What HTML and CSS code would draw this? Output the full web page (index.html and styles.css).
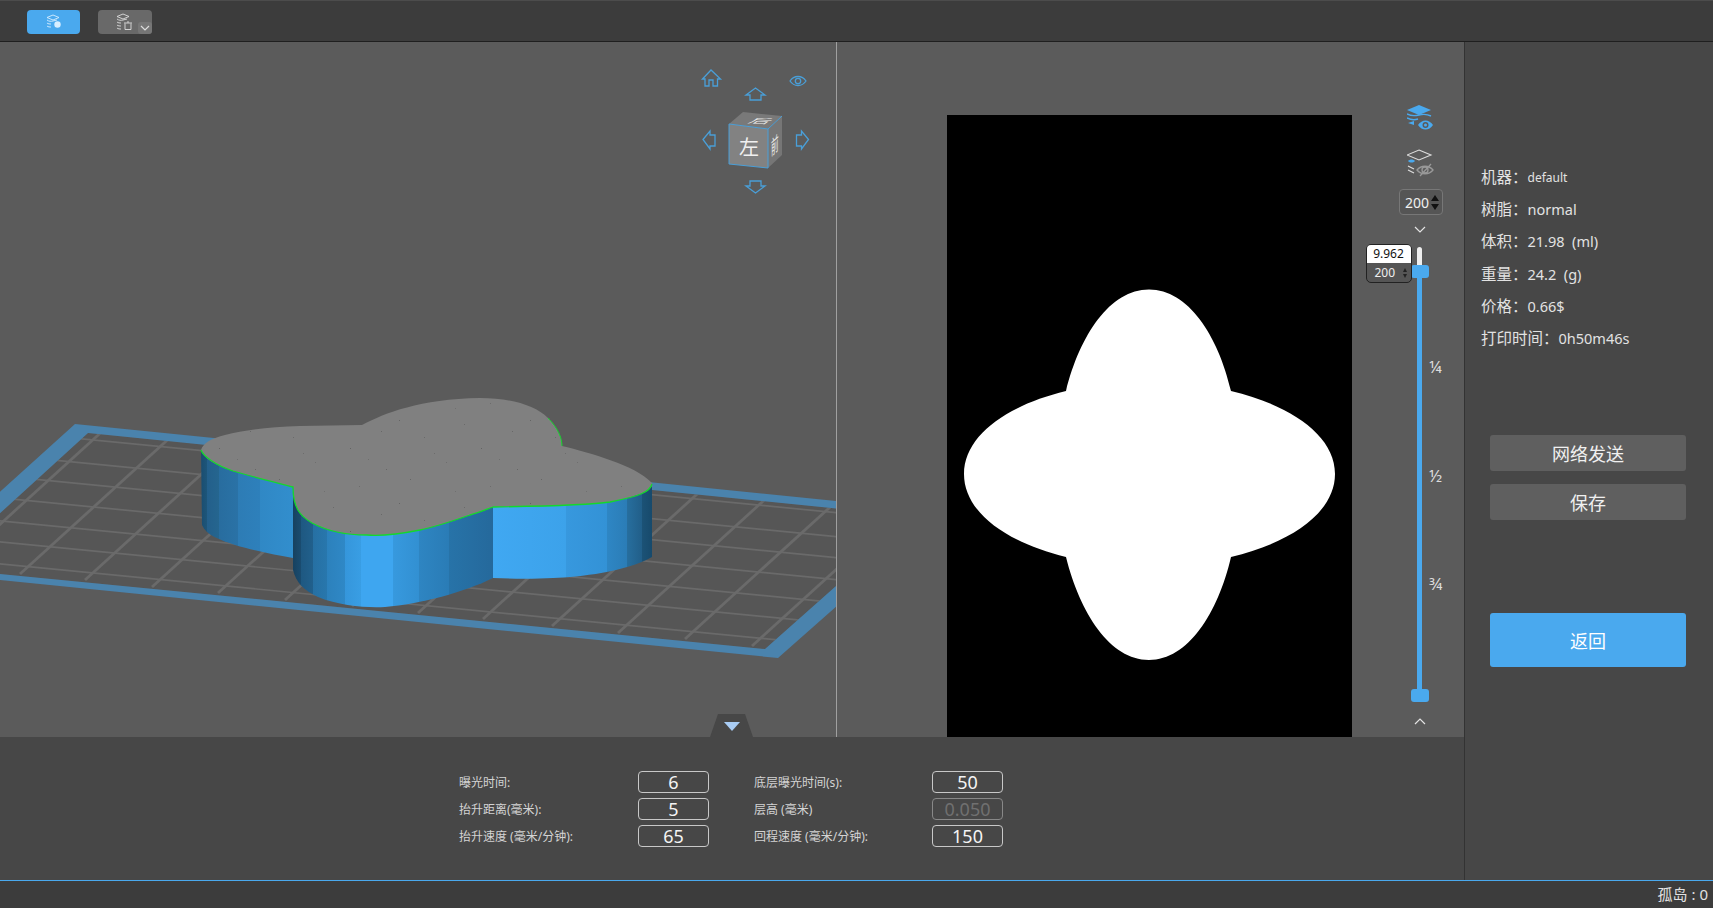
FILE: index.html
```html
<!DOCTYPE html>
<html lang="zh-CN">
<head>
    <meta charset="UTF-8">
    <title>切片预览</title>
    <link rel="stylesheet" href="styles.css">
</head>
<body>
<div class="app">
    <div class="toolbar">
        <button class="tool-btn tool-btn-active">
            <svg width="18" height="16" viewBox="0 0 18 16" fill="none" stroke="#d8eeff" stroke-width="0.900">
                <path d="M8 1l6 2.500-6 2.500-6-2.500zM2 6c2 1.500 4 1.500 6 1l4-1M2 9c1 1 3 1 4 1M2 12c1 1 3 1 4 1"/>
                <circle cx="12.500" cy="10.500" r="3.200" fill="#d8eeff" stroke="none"/>
            </svg>
        </button>
        <button class="tool-btn tool-btn-gray">
            <svg class="tool-gray-icon" width="18" height="18" viewBox="0 0 18 18" fill="none" stroke="#ddd" stroke-width="0.900">
                <path d="M7 1l6 2.500-6 2.500-6-2.500zM1 6c2 1.500 4 1.500 6 1l4-1M1 9c1 1 3 1 4 1M1 12c1 1 3 1 4 1M1 15c1 1 3 1 4 1"/>
                <path d="M8 10h8M9 10.500v6h6v-6M11 9h2"/>
            </svg>
            <span class="tool-drop">
                <svg width="10" height="6" viewBox="0 0 10 6" fill="none" stroke="#ddd" stroke-width="1.200"><path d="M1 1l4 4 4-4"/></svg>
            </span>
        </button>
    </div>

    <div class="main">
        <div class="workspace">
            <div class="views">
                <!-- 3D view, drawn in screen coordinates -->
                <div class="view-3d">
                    <svg class="scene" width="836" height="695" viewBox="0 42 836 695">
                        <defs>
                            <clipPath id="plateInner">
                                <path d="M88 433L880 513L880 547L765 649L-60 568Z"/>
                            </clipPath>
                            <linearGradient id="sideBack" gradientUnits="userSpaceOnUse" x1="201" y1="0" x2="293" y2="0">
                                <stop offset="0" stop-color="#1a4d70"/>
                                <stop offset="0.06" stop-color="#1d5579"/>
                                <stop offset="0.06" stop-color="#235f8b"/>
                                <stop offset="0.2" stop-color="#25668f"/>
                                <stop offset="0.2" stop-color="#286d9f"/>
                                <stop offset="0.4" stop-color="#2a72a6"/>
                                <stop offset="0.4" stop-color="#2d7cb5"/>
                                <stop offset="0.64" stop-color="#2e80bb"/>
                                <stop offset="0.64" stop-color="#3088c5"/>
                                <stop offset="1" stop-color="#328ecd"/>
                            </linearGradient>
                            <linearGradient id="sideFront" gradientUnits="userSpaceOnUse" x1="293" y1="0" x2="493" y2="0">
                                <stop offset="0" stop-color="#17415f"/>
                                <stop offset="0.04" stop-color="#1a4c70"/>
                                <stop offset="0.04" stop-color="#1e5881"/>
                                <stop offset="0.1" stop-color="#21608c"/>
                                <stop offset="0.1" stop-color="#2670a3"/>
                                <stop offset="0.17" stop-color="#2877ad"/>
                                <stop offset="0.17" stop-color="#2c81bc"/>
                                <stop offset="0.26" stop-color="#2f88c6"/>
                                <stop offset="0.26" stop-color="#3596db"/>
                                <stop offset="0.34" stop-color="#399ee4"/>
                                <stop offset="0.34" stop-color="#3ea6f0"/>
                                <stop offset="0.5" stop-color="#3ea6f0"/>
                                <stop offset="0.5" stop-color="#3799de"/>
                                <stop offset="0.63" stop-color="#3290d2"/>
                                <stop offset="0.63" stop-color="#2e85c2"/>
                                <stop offset="0.78" stop-color="#2a7cb6"/>
                                <stop offset="0.78" stop-color="#2773a8"/>
                                <stop offset="1" stop-color="#25699c"/>
                            </linearGradient>
                            <linearGradient id="sideRight" gradientUnits="userSpaceOnUse" x1="493" y1="0" x2="652" y2="0">
                                <stop offset="0" stop-color="#40a8f2"/>
                                <stop offset="0.46" stop-color="#3ca2ea"/>
                                <stop offset="0.46" stop-color="#3798de"/>
                                <stop offset="0.72" stop-color="#3392d6"/>
                                <stop offset="0.72" stop-color="#2e86c4"/>
                                <stop offset="0.84" stop-color="#2b7db7"/>
                                <stop offset="0.84" stop-color="#276f9f"/>
                                <stop offset="0.94" stop-color="#215e88"/>
                                <stop offset="0.94" stop-color="#1b5276"/>
                                <stop offset="1" stop-color="#174a6c"/>
                            </linearGradient>
                            <pattern id="speckle" patternUnits="userSpaceOnUse" width="131" height="83">
                                <rect width="1" height="1" x="6" y="5" fill="#646464"/>
                                <rect width="1" height="1" x="31" y="22" fill="#6a6a6a"/>
                                <rect width="1" height="1" x="17" y="64" fill="#666"/>
                                <rect width="1" height="1" x="53" y="47" fill="#6e6e6e"/>
                                <rect width="1" height="1" x="71" y="9" fill="#6a6a6a"/>
                                <rect width="1" height="1" x="88" y="33" fill="#646464"/>
                                <rect width="1" height="1" x="97" y="71" fill="#6c6c6c"/>
                                <rect width="1" height="1" x="119" y="16" fill="#686868"/>
                                <rect width="1" height="1" x="124" y="54" fill="#666"/>
                                <rect width="1" height="1" x="62" y="76" fill="#707070"/>
                                <rect width="1" height="1" x="41" y="38" fill="#6c6c6c"/>
                                <rect width="1" height="1" x="106" y="44" fill="#6e6e6e"/>
                            </pattern>
                            <path id="modelTop" d="M201 450C203 443 212 438 225 435C245 430 270 427 300 426L362 425C385 413 420 399 480 398C510 398 535 405 548 418C558 428 562 438 562 446C590 453 635 465 652 483C654 490 640 496 610 502C590 505 560 506 493 507C485 510 478 513 470 515C450 522 430 528 420 530C400 534 380 536 367 535C345 535 325 530 312 523C300 516 293 508 293 487C270 481 250 476 233 471C215 465 203 458 201 450Z"/>
                        </defs>

                        <!-- build plate -->
                        <path d="M88 433L880 513L880 547L765 649L-60 568Z" fill="#565656"/>
                        <g clip-path="url(#plateInner)" fill="none" stroke="#6a6a6a">
                            <g stroke-width="1.700">
                                <path d="M-60 425L880 517"/>
                                <path d="M-60 449L880 541"/>
                                <path d="M-60 470L880 562"/>
                                <path d="M-60 492L880 584"/>
                                <path d="M-60 515L880 607"/>
                                <path d="M-60 536L880 628"/>
                                <path d="M-60 558L880 650"/>
                            </g>
                            <g stroke-width="2.800">
                                <path d="M-47 567L140 397"/>
                                <path d="M20 574L207 404"/>
                                <path d="M85 580L272 410"/>
                                <path d="M152 587L339 417"/>
                                <path d="M218 593L405 423"/>
                                <path d="M285 600L472 430"/>
                                <path d="M352 606L539 436"/>
                                <path d="M418 613L605 443"/>
                                <path d="M483 619L670 449"/>
                                <path d="M552 626L739 456"/>
                                <path d="M618 633L805 463"/>
                                <path d="M685 639L872 469"/>
                                <path d="M752 646L939 476"/>
                            </g>
                        </g>
                        <path fill="#4a83ad" fill-rule="evenodd" d="M75 424L880 505.500L880 568L778 658L-60 574V546ZM88 433L-60 568L765 649L880 547V513Z"/>

                        <!-- model -->
                        <path fill="url(#sideBack)" d="M201 450L202 525C206 535 220 540 235 545C252 550 275 555 293 558V487Z"/>
                        <path fill="url(#sideRight)" d="M493 507L493 578C515 579 535 579 553 578C580 577 625 572 652 557V484Z"/>
                        <path fill="url(#sideFront)" d="M293 497V570C296 582 303 590 318 597C340 606 367 608 385 607C420 604 465 592 493 578V507Z"/>
                        <use href="#modelTop" fill="#808080"/>
                        <use href="#modelTop" fill="url(#speckle)"/>
                        <path fill="none" stroke="#14d82c" stroke-width="1.300" d="M201 450C203 456 215 465 233 471C250 476 270 481 293 487C293 508 300 516 312 523C325 530 345 535 367 535C380 536 400 534 420 530C430 528 450 522 470 515C478 513 485 510 493 507C560 506 590 505 610 502C640 496 650 492 652 484"/>
                        <path fill="none" stroke="#14d82c" stroke-width="1" d="M548 418C558 428 562 438 562 446"/>

                        <!-- view cube -->
                        <path d="M729 124L743 112L782 116L768 129Z" fill="#797979"/>
                        <path d="M729 124L768 129V168L729 164Z" fill="#828282"/>
                        <path d="M768 129L782 116V155L768 168Z" fill="#767676"/>
                        <path d="M729 164V124L768 129V168L729 164M768 129L782 116" fill="none" stroke="#4a9fd8" stroke-width="1"/>
                        <text class="cube-front" x="749" y="155">左</text>
                        <text class="cube-side" transform="matrix(0.42 -0.38 0 1.1 771 156)">前</text>
                        <text class="cube-side" transform="matrix(1.15 0.05 -0.5 0.36 747 123)">后</text>

                        <!-- camera controls -->
                        <g fill="none" stroke="#4a9fd8" stroke-width="1.300">
                            <path d="M702.500 79L711 70L720.500 79H717.500V86H713V80H709V86H705V79Z"/>
                            <path d="M790 81C794 75 802 75 806 81C802 87 794 87 790 81Z"/>
                            <circle cx="798" cy="81" r="2.700"/>
                            <path d="M746 95L755.500 88L765 95H761V100H750V95Z"/>
                            <path d="M746 186L755.500 193L765 186H761V181H750V186Z"/>
                            <path d="M703 139.500L710 131V135H715V146H710V149Z"/>
                            <path d="M808.500 139.500L801.500 131V135H796.500V146H801.500V149Z"/>
                        </g>
                    </svg>
                </div>

                <div class="view-slice">
                    <div class="slice-image">
                        <svg width="405" height="622" viewBox="947 115 405 622">
                            <path fill="#fff" d="M1066 391C1080 335 1110 289.500 1149 289.500C1188 289.500 1218 335 1231 391C1290 405 1335 435 1335 474C1335 513 1290 543 1231 557C1218 613 1188 660 1149 660C1110 660 1080 613 1066 557C1008 543 964 513 964 474C964 435 1008 405 1066 391Z"/>
                        </svg>
                    </div>
                    <div class="layer-bar">
                        <svg class="layer-icon" width="28" height="28" viewBox="0 0 28 28" fill="none">
                            <path d="M12 1l12 5-12 5-12-5z" fill="#4aa9ee"/>
                            <path d="M0 10c4 2 8 2 12 1s8-1 12 1M0 14c4 2 8 2 11 1" stroke="#4aa9ee" stroke-width="1.400"/>
                            <path d="M1 19l6-2v4z" fill="#4aa9ee"/>
                            <path d="M11 21c4-6 11-6 15 0-4 6-11 6-15 0z" fill="#4aa9ee"/>
                            <circle cx="18.500" cy="21" r="3" fill="#5b5b5b"/>
                            <circle cx="18.500" cy="21" r="1.500" fill="#4aa9ee"/>
                        </svg>
                        <svg class="layer-icon layer-icon-second" width="28" height="28" viewBox="0 0 28 28" fill="none">
                            <path d="M12 1l12 5-12 5-12-5z" stroke="#ddd" stroke-width="1.100"/>
                            <path d="M1 12c2-2 5-2 7 0-2 2-5 2-7 0z" fill="#4aa9ee"/>
                            <path d="M1 17l6 3M1 21l6 3" stroke="#ddd" stroke-width="1.200"/>
                            <path d="M10 21c4-5 12-5 16 0-4 5-12 5-16 0z" stroke="#999" stroke-width="1.300"/>
                            <circle cx="18" cy="21" r="3" stroke="#999" stroke-width="1.300"/>
                            <path d="M13 27L24 15" stroke="#999" stroke-width="1.300"/>
                        </svg>
                        <div class="spin-box">
                            <span class="spin-value">200</span>
                            <span class="spin-arrows"><i class="arrow-up"></i><i class="arrow-down"></i></span>
                        </div>
                        <svg class="chev" width="12" height="7" viewBox="0 0 12 7" fill="none" stroke="#e4e4e4" stroke-width="1.200"><path d="M1 1l5 5 5-5"/></svg>
                        <div class="slider">
                            <div class="slider-rest"></div>
                            <div class="slider-knob"></div>
                            <div class="slider-track">
                                <span class="frac">¼</span>
                                <span class="frac">½</span>
                                <span class="frac">¾</span>
                            </div>
                            <div class="slider-knob"></div>
                            <div class="slider-tip">
                                <div class="tip-top">9.962</div>
                                <div class="tip-bottom">
                                    <span>200</span>
                                    <span class="spin-arrows spin-arrows-small"><i class="arrow-up"></i><i class="arrow-down"></i></span>
                                </div>
                            </div>
                        </div>
                        <svg class="chev chev-up" width="12" height="7" viewBox="0 0 12 7" fill="none" stroke="#e4e4e4" stroke-width="1.200"><path d="M1 6l5-5 5 5"/></svg>
                    </div>
                </div>
            </div>

            <div class="params">
                <div class="collapse-tab"><span class="collapse-arrow"></span></div>
                <span class="param-label">曝光时间:</span>
                <div class="param-input">6</div>
                <span></span>
                <span class="param-label">底层曝光时间(s):</span>
                <div class="param-input">50</div>

                <span class="param-label">抬升距离(毫米):</span>
                <div class="param-input">5</div>
                <span></span>
                <span class="param-label">层高 (毫米)</span>
                <div class="param-input param-input-off">0.050</div>

                <span class="param-label">抬升速度 (毫米/分钟):</span>
                <div class="param-input">65</div>
                <span></span>
                <span class="param-label">回程速度 (毫米/分钟):</span>
                <div class="param-input">150</div>
            </div>
        </div>

        <div class="side-panel">
            <ul class="info-list">
                <li><span class="info-name">机器：</span><span class="info-small">default</span></li>
                <li><span class="info-name">树脂：</span><span class="info-value">normal</span></li>
                <li><span class="info-name">体积：</span><span class="info-value">21.98&nbsp;&nbsp;(ml)</span></li>
                <li><span class="info-name">重量：</span><span class="info-value">24.2&nbsp;&nbsp;(g)</span></li>
                <li><span class="info-name">价格：</span><span class="info-value">0.66$</span></li>
                <li><span class="info-name">打印时间：</span><span class="info-value">0h50m46s</span></li>
            </ul>
            <button class="side-btn">网络发送</button>
            <button class="side-btn side-btn-save">保存</button>
            <button class="side-btn side-btn-back">返回</button>
        </div>
    </div>

    <div class="statusbar">孤岛 : 0</div>
</div>
</body>
</html>
```

FILE: styles.css
```css
html, body {
    margin: 0;
    padding: 0;
    height: 100%;
    overflow: hidden;
}
body {
    font-family: "Noto Sans", "Noto Sans CJK SC", sans-serif;
    color: #e2e2e2;
    background-color: #474747;
}
button {
    font-family: inherit;
    border: none;
    padding: 0;
}
.app {
    display: flex;
    flex-direction: column;
    height: 908px;
}

/* top toolbar */
.toolbar {
    height: 42px;
    flex-shrink: 0;
    display: flex;
    align-items: flex-start;
    gap: 18px;
    padding: 9px 0 0 27px;
    box-sizing: border-box;
    background-color: #3c3c3c;
    border-top: 1px solid #4c4c4c;
    border-bottom: 1px solid #1f1f1f;
}
.tool-btn {
    position: relative;
    width: 53px;
    height: 24px;
    border-radius: 4px;
    display: flex;
    align-items: center;
    justify-content: center;
}
.tool-btn-active {
    background-color: #4aa9ee;
}
.tool-btn-gray {
    width: 54px;
    background-color: #696969;
}
.tool-drop {
    position: absolute;
    right: 0;
    bottom: 0;
    width: 14px;
    height: 12px;
    display: flex;
    align-items: center;
    justify-content: center;
    background-color: #767676;
    border-radius: 3px;
}

.main {
    flex: 1;
    display: flex;
    min-height: 0;
}
.workspace {
    width: 1464px;
    display: flex;
    flex-direction: column;
}
.views {
    height: 695px;
    display: flex;
    background-color: #5b5b5b;
}
.view-3d {
    width: 836px;
    overflow: hidden;
    border-right: 1px solid #a0a0a0;
}
.scene {
    display: block;
}
.cube-front {
    font-size: 20px;
    fill: #f0f0f0;
    text-anchor: middle;
}
.cube-side {
    font-size: 18px;
    fill: #e8e8e8;
}

/* slice preview */
.view-slice {
    flex: 1;
    display: flex;
}
.slice-image {
    width: 405px;
    height: 622px;
    margin: 73px 0 0 110px;
    background-color: #000;
}
.slice-image svg {
    display: block;
}
.layer-bar {
    width: 44px;
    margin-left: 47px;
    padding-top: 62px;
    display: flex;
    flex-direction: column;
    align-items: center;
}
.layer-icon-second {
    margin-top: 17px;
}
.spin-box {
    width: 44px;
    height: 26px;
    margin-top: 12px;
    flex-shrink: 0;
    box-sizing: border-box;
    display: flex;
    align-items: center;
    justify-content: space-between;
    padding: 0 3px 0 5px;
    border: 1px solid #777;
    border-radius: 4px;
    background-color: #555;
    font-size: 14px;
    color: #f0f0f0;
}
.spin-arrows {
    display: flex;
    flex-direction: column;
    gap: 3px;
}
.arrow-up, .arrow-down {
    display: block;
    width: 0;
    height: 0;
    border-left: 4px solid transparent;
    border-right: 4px solid transparent;
}
.arrow-up {
    border-bottom: 6px solid #111;
}
.arrow-down {
    border-top: 6px solid #111;
}
.chev {
    margin: 11px 3px 0 0;
    flex-shrink: 0;
}
.chev-up {
    margin-top: 16px;
}
.slider {
    position: relative;
    width: 18px;
    margin: 14px 3px 0 0;
    display: flex;
    flex-direction: column;
    align-items: center;
}
.slider-rest {
    width: 5px;
    height: 18px;
    background-color: #eee;
    border-radius: 3px 3px 0 0;
}
.slider-knob {
    width: 18px;
    height: 13px;
    flex-shrink: 0;
    background-color: #4aa9ee;
    border-radius: 3px;
}
.slider-track {
    position: relative;
    width: 5px;
    height: 411px;
    background-color: #4aa9ee;
}
.frac {
    position: absolute;
    left: 12px;
    font-size: 17px;
    line-height: 18px;
    color: #ddd;
}
.frac:nth-child(1) { top: 80px; }
.frac:nth-child(2) { top: 189px; }
.frac:nth-child(3) { top: 297px; }
.slider-tip {
    position: absolute;
    top: -3px;
    right: 17px;
    width: 46px;
    height: 39px;
    box-sizing: border-box;
    border: 1px solid #222;
    border-radius: 5px;
    overflow: hidden;
    background-color: #555;
    font-size: 12px;
}
.tip-top {
    height: 18px;
    line-height: 18px;
    text-align: center;
    background-color: #fff;
    color: #111;
}
.tip-bottom {
    height: 19px;
    display: flex;
    align-items: center;
    justify-content: space-between;
    padding: 0 4px 0 8px;
    color: #eee;
}
.spin-arrows-small {
    gap: 2px;
}
.spin-arrows-small .arrow-up, .spin-arrows-small .arrow-down {
    border-left-width: 2.5px;
    border-right-width: 2.5px;
}
.spin-arrows-small .arrow-up {
    border-bottom: 4px solid #222;
}
.spin-arrows-small .arrow-down {
    border-top: 4px solid #222;
}

/* print parameters */
.params {
    position: relative;
    flex: 1;
    box-sizing: border-box;
    padding: 34px 0 0 459px;
    display: grid;
    grid-template-columns: 179px 71px 45px 178px 71px;
    grid-auto-rows: 22px;
    row-gap: 4.8px;
    align-items: center;
    background-color: #474747;
}
.param-label {
    font-size: 12px;
    color: #d4d4d4;
}
.param-input {
    height: 22px;
    box-sizing: border-box;
    border: 1px solid #c8c8c8;
    border-radius: 4px;
    font-size: 18px;
    line-height: 20px;
    text-align: center;
    color: #f4f4f4;
}
.param-input-off {
    border-color: #888;
    color: #707070;
}
.collapse-tab {
    position: absolute;
    top: -23px;
    left: 710px;
    width: 43px;
    height: 23px;
    display: flex;
    justify-content: center;
    padding-top: 8px;
    box-sizing: border-box;
    background-color: #474747;
    clip-path: polygon(8px 0, 35px 0, 43px 100%, 0 100%);
}
.collapse-arrow {
    width: 0;
    height: 0;
    border-left: 8px solid transparent;
    border-right: 8px solid transparent;
    border-top: 9px solid #a9cdf5;
}

/* right panel */
.side-panel {
    flex: 1;
    box-sizing: border-box;
    padding: 119px 26px 0 16px;
    border-left: 1px solid #333;
    background-color: #474747;
}
.info-list {
    list-style: none;
    margin: 0 0 81px;
    padding: 0;
}
.info-list li {
    height: 32.2px;
    line-height: 32px;
    font-size: 15.5px;
    color: #e2e2e2;
    white-space: nowrap;
}
.info-value {
    font-size: 14.5px;
}
.info-small {
    font-size: 12px;
    position: relative;
    top: -1px;
}
.side-btn {
    display: block;
    width: 196px;
    height: 36px;
    margin-left: 9px;
    border-radius: 3px;
    background-color: #5f5f5f;
    color: #f0f0f0;
    font-size: 18px;
}
.side-btn-save {
    margin-top: 13px;
}
.side-btn-back {
    margin-top: 93px;
    height: 54px;
    background-color: #4aa9ee;
    color: #fff;
}

/* bottom status */
.statusbar {
    height: 28px;
    flex-shrink: 0;
    box-sizing: border-box;
    border-top: 1px solid #4aa9ee;
    background-color: #3c3c3c;
    padding-right: 5px;
    text-align: right;
    font-size: 15px;
    line-height: 27px;
    color: #e2e2e2;
}
```
